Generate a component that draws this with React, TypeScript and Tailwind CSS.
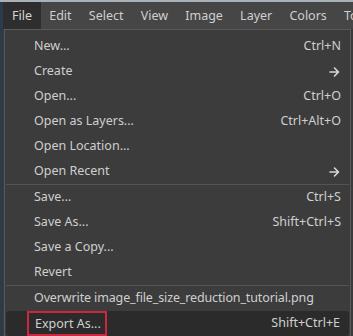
import React from "react";

const font = { fontFamily: '"Noto Sans", "Open Sans", sans-serif' };

function Arrow() {
  return (
    <svg width="11" height="10" viewBox="0 0 11 10" className="block">
      <path d="M1 5h8.5M5.5 1l4 4-4 4" fill="none" stroke="#d8d8d8" strokeWidth="1.6" strokeLinecap="round" strokeLinejoin="round" />
    </svg>
  );
}

type Item = { label: string; sc?: string; arrow?: boolean; tight?: boolean };

function Row({ it, hl }: { it: Item; hl?: boolean }) {
  return (
    <div className={`h-[25px] flex items-center justify-between pl-[29px] pr-[9px] ${hl ? "bg-[#2b2b2b] rounded-[3px] mx-[1px] pl-[28px] pr-[8px]" : ""}`}>
      {hl ? (
        <span className="border-2 border-[#c9283e] h-[25px] flex items-center pl-[6px] pr-[4px] -ml-[8px] pt-[1px]">{it.label}</span>
      ) : (
        <span className={it.tight ? "tracking-[-0.13px]" : ""}>{it.label}</span>
      )}
      {it.sc && <span>{it.sc}</span>}
      {it.arrow && (
        <span className="pr-[1px]">
          <Arrow />
        </span>
      )}
    </div>
  );
}

function Sep() {
  return <div className="h-[1px] bg-[#545454] mx-[1px]" />;
}

export default function App() {
  const g1: Item[] = [
    { label: "New...", sc: "Ctrl+N" },
    { label: "Create", arrow: true },
    { label: "Open...", sc: "Ctrl+O" },
    { label: "Open as Layers...", sc: "Ctrl+Alt+O" },
    { label: "Open Location..." },
    { label: "Open Recent", arrow: true },
  ];
  const g2: Item[] = [
    { label: "Save...", sc: "Ctrl+S" },
    { label: "Save As...", sc: "Shift+Ctrl+S" },
    { label: "Save a Copy..." },
    { label: "Revert" },
  ];
  return (
    <div className="w-[353px] h-[336px] overflow-hidden bg-[#3c3c3c] text-[#cfcfcf] text-[12.5px] flex flex-col border-t-2 border-[#a9b1b9]" style={font}>
      <div className="h-[28px] bg-[#464646] flex items-end border-l-[3px] border-[#2c3b4c]">
        {["File", "Edit", "Select", "View", "Image", "Layer", "Colors", "Tools"].map((m, i) => (
          <div key={m} className={`h-[27px] shrink-0 flex items-center px-[8.6px] pt-[2px] ${i === 0 ? "bg-[#2e2e2e] text-[#d6d6d6] pl-[9px]" : ""}`}>
            {m}
          </div>
        ))}
      </div>
      <div className="flex flex-1 border-l-[3px] border-[#2c3b4c] bg-[#3a3a3a]">
        <div className="w-[347px] border border-[#5a5a5a] border-b-0 bg-[#3c3c3c] pt-[4px] ml-[1px]">
          {g1.map((it) => (
            <Row key={it.label} it={it} />
          ))}
          <Sep />
          {g2.map((it) => (
            <Row key={it.label} it={it} />
          ))}
          <Sep />
          <Row it={{ label: "Overwrite image_file_size_reduction_tutorial.png", tight: true }} />
          <Row it={{ label: "Export As...", sc: "Shift+Ctrl+E" }} hl />
        </div>
      </div>
    </div>
  );
}
